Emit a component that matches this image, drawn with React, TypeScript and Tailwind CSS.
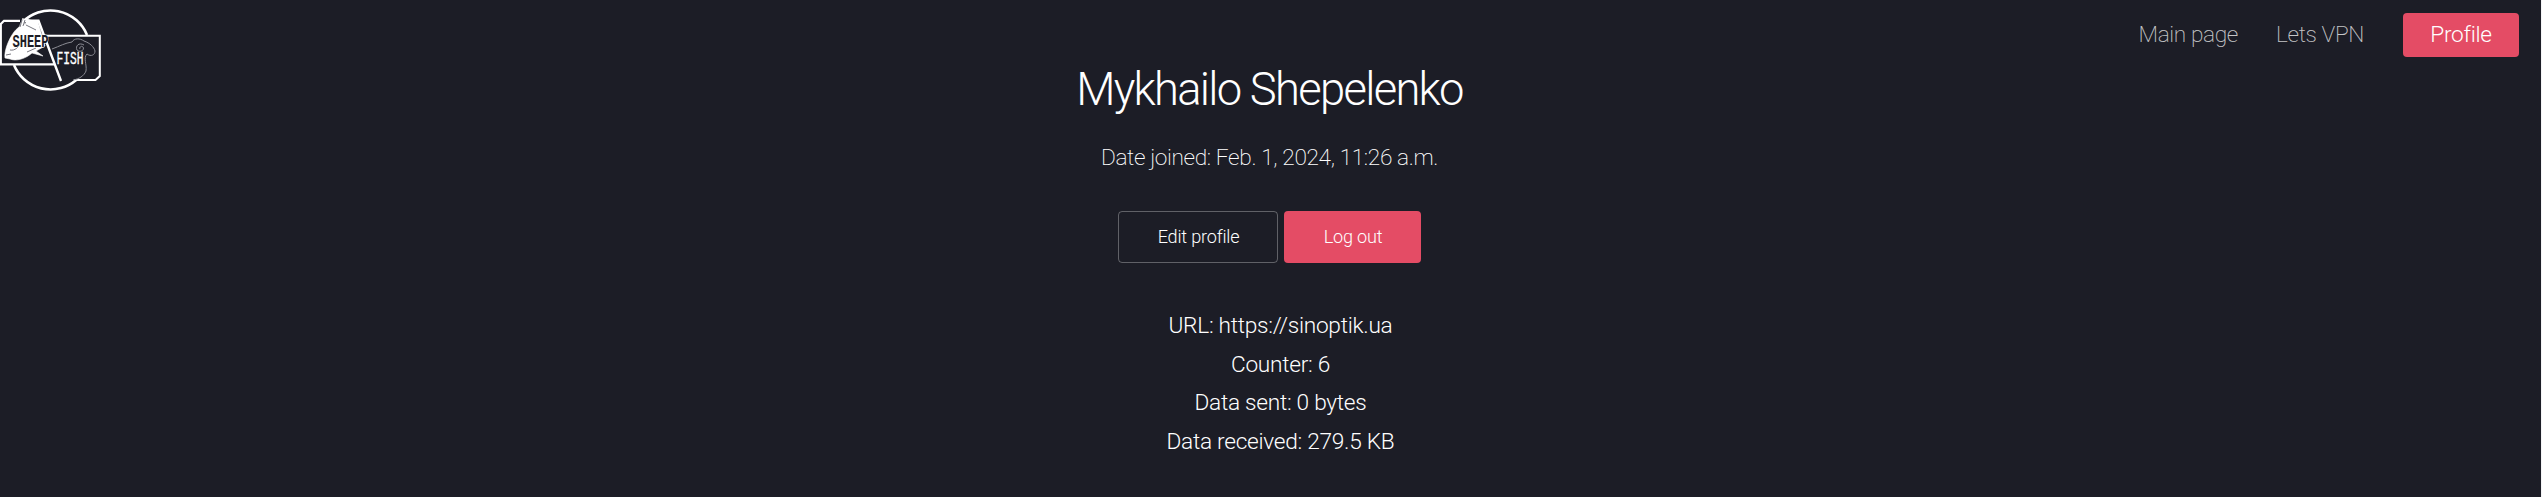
function Logo() {
  return (
    <svg viewBox="0 0 104 94" className="block h-[94px] w-[104px] shrink-0" fill="none" stroke="#fff">
      <path d="M22.6 22 A39.5 39.5 0 0 1 87 35" strokeWidth="2.6" />
      <path d="M14 65 A39.5 39.5 0 0 0 76.2 80" strokeWidth="2.6" />
      <path d="M20 20.8 H4 L0.8 24 V64.3 H54" strokeWidth="2.2" />
      <path d="M24 20.8 H38.5 L61 81" strokeWidth="2.4" />
      <path d="M44 35.8 H99.8 V76 L95.5 80 H74" strokeWidth="2" />
      <path d="M5 58 C4 52 8 40 14 32 C17 28 20 27 20 25 L23 18 L25 25 L27 19 L30 20 L38 22 L45 46 L36 51 L43 56 L32 53 C24 60 15 61 10 59 Z" fill="#fff" strokeWidth="0.6" />
      <path d="M6 55 L11 54 M10 50 C15 51 19 47 20 43 M27 52 L36 48 M20 27 L22 20 M23 26 L25 20 M26 25 L36 30" stroke="#555660" strokeWidth="0.8" />
      <path d="M52 49 C60 46 65 43 72 42 C74 38 80 38 84 41 C90 43 94 47 95 51 C95 55 91 57 87 54 C83 58 87 64 86 71 C84 76 79 79 73 80 M84 45 C79 42 75 46 77 50 C80 53 85 50 83 47 C81 45 79 48 80 49" stroke="#8b8c94" strokeWidth="1" />
      <text x="12.5" y="47" textLength="36" lengthAdjust="spacingAndGlyphs" fill="#1c1d26" stroke="#fff" strokeWidth="1" paintOrder="stroke" className="font-['Liberation_Mono',monospace] text-[18.5px] font-bold">SHEEP</text>
      <text x="56.5" y="64" textLength="27" lengthAdjust="spacingAndGlyphs" fill="#fff" stroke="#fff" strokeWidth="0.35" className="font-['Liberation_Mono',monospace] text-[19px]">FISH</text>
    </svg>
  );
}

const stats = ["URL: https://sinoptik.ua", "Counter: 6", "Data sent: 0 bytes", "Data received: 279.5 KB"];

export default function App() {
  return (
    <div className="flex h-[497px] w-full overflow-hidden border-r border-[#f4f4f6] bg-[#1c1d26] font-['Roboto',sans-serif] text-white">
      <div className="flex min-w-0 flex-1 flex-col">
        <header className="flex h-[70px] items-start justify-between pr-[22px]">
          <a href="#" className="shrink-0"><Logo /></a>
          <nav className="flex items-center pt-[13px] text-[22.67px] font-extralight leading-[44px] tracking-[-0.36px]">
            <a href="#" className="mr-[38px] text-white/75">Main page</a>
            <a href="#" className="mr-[39px] text-white/75">Lets VPN</a>
            <a href="#" className="flex h-11 w-[116px] items-center justify-center rounded-[4px] bg-[#e44c65] font-light tracking-[-0.28px]">Profile</a>
          </nav>
        </header>
        <main className="flex flex-col items-center pr-[2px]">
          <h2 className="-mt-[14px] text-[45.33px] font-light leading-[68px] tracking-[-1.7px]">Mykhailo Shepelenko</h2>
          <p className="mt-[14px] text-[22.67px] font-extralight leading-[40px] tracking-[-0.37px]">Date joined: Feb. 1, 2024, 11:26 a.m.</p>
          <div className="mr-px mt-[33px] flex gap-[6px] text-[18.1px] font-light tracking-[-0.2px]">
            <button className="h-[52px] w-[160px] rounded-[4px] border border-white/30 pl-[2px]">Edit profile</button>
            <button className="h-[52px] w-[137px] rounded-[4px] bg-[#e44c65] pl-[2px]">Log out</button>
          </div>
          <ul className="ml-[22px] mt-[44px] text-center text-[22.67px] font-light leading-[38.7px] tracking-[-0.28px]">
            {stats.map((item) => <li key={item}>{item}</li>)}
          </ul>
        </main>
      </div>
    </div>
  );
}
